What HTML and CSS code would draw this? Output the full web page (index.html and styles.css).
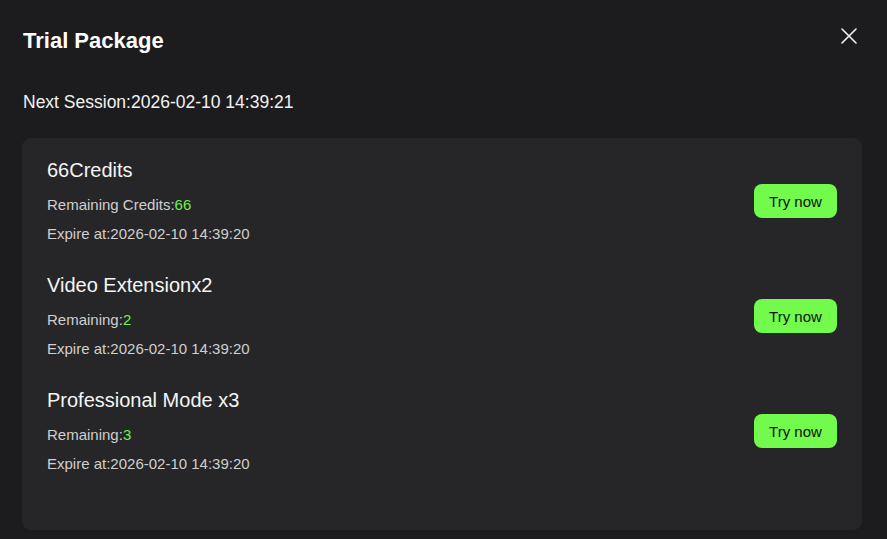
FILE: index.html
```html
<!DOCTYPE html>
<html>
<head>
<meta charset="utf-8">
<link rel="stylesheet" href="styles.css">
</head>
<body>
<div class="dialog">
  <div class="header">
    <h1 class="title">Trial Package</h1>
    <button class="close" aria-label="Close">
      <svg width="16" height="16" viewBox="0 0 16 16"><path d="M1 1L15 15M15 1L1 15" stroke="#f2f2f2" stroke-width="1.6" fill="none" stroke-linecap="round"/></svg>
    </button>
  </div>
  <div class="session">Next Session:2026-02-10 14:39:21</div>
  <div class="card">
    <div class="row">
      <div class="info">
        <div class="name">66Credits</div>
        <div class="line">Remaining Credits:<span class="num">66</span></div>
        <div class="line">Expire at:2026-02-10 14:39:20</div>
      </div>
      <button class="try">Try now</button>
    </div>
    <div class="row">
      <div class="info">
        <div class="name">Video Extensionx2</div>
        <div class="line">Remaining:<span class="num">2</span></div>
        <div class="line">Expire at:2026-02-10 14:39:20</div>
      </div>
      <button class="try">Try now</button>
    </div>
    <div class="row">
      <div class="info">
        <div class="name">Professional Mode x3</div>
        <div class="line">Remaining:<span class="num">3</span></div>
        <div class="line">Expire at:2026-02-10 14:39:20</div>
      </div>
      <button class="try">Try now</button>
    </div>
  </div>
</div>
</body>
</html>
```

FILE: styles.css
```css
html, body {
  margin: 0;
  padding: 0;
  background: #1c1c1e;
  font-family: "Liberation Sans", Arial, sans-serif;
}
.dialog {
  width: 887px;
  height: 539px;
  box-sizing: border-box;
  padding: 28px 25px 0 22px;
  background: #1c1c1e;
}
.header {
  display: flex;
  justify-content: space-between;
  align-items: flex-start;
  height: 26px;
}
.title {
  margin: 0;
  font-size: 22px;
  line-height: 26px;
  font-weight: bold;
  color: #ffffff;
  padding-left: 1px;
}
.close {
  background: none;
  border: none;
  padding: 0;
  margin: 0 5px 0 0;
  width: 16px;
  height: 16px;
  cursor: pointer;
  display: block;
}
.close svg { display: block; }
.session {
  margin-top: 38px;
  font-size: 17.5px;
  line-height: 20px;
  color: #f2f2f2;
  padding-left: 1px;
}
.card {
  margin-top: 26px;
  background: #262628;
  border-radius: 9px;
  height: 392px;
  box-sizing: border-box;
  padding: 20px 25px 0 25px;
  display: flex;
  flex-direction: column;
  gap: 29px;
}
.row {
  display: flex;
  justify-content: space-between;
  align-items: center;
}
.info {
  display: flex;
  flex-direction: column;
}
.name {
  font-size: 20px;
  line-height: 24px;
  color: #f5f5f5;
  margin-bottom: 13px;
}
.line {
  font-size: 15px;
  line-height: 20px;
  color: #cfcfcf;
  margin-bottom: 9px;
}
.line:last-child { margin-bottom: 0; }
.num { color: #6ef24a; }
.try {
  width: 83px;
  height: 34px;
  border: none;
  border-radius: 8px;
  background: #72fa4c;
  color: #111111;
  font-family: "Liberation Sans", Arial, sans-serif;
  font-size: 15px;
  padding: 0;
  cursor: pointer;
}
```
